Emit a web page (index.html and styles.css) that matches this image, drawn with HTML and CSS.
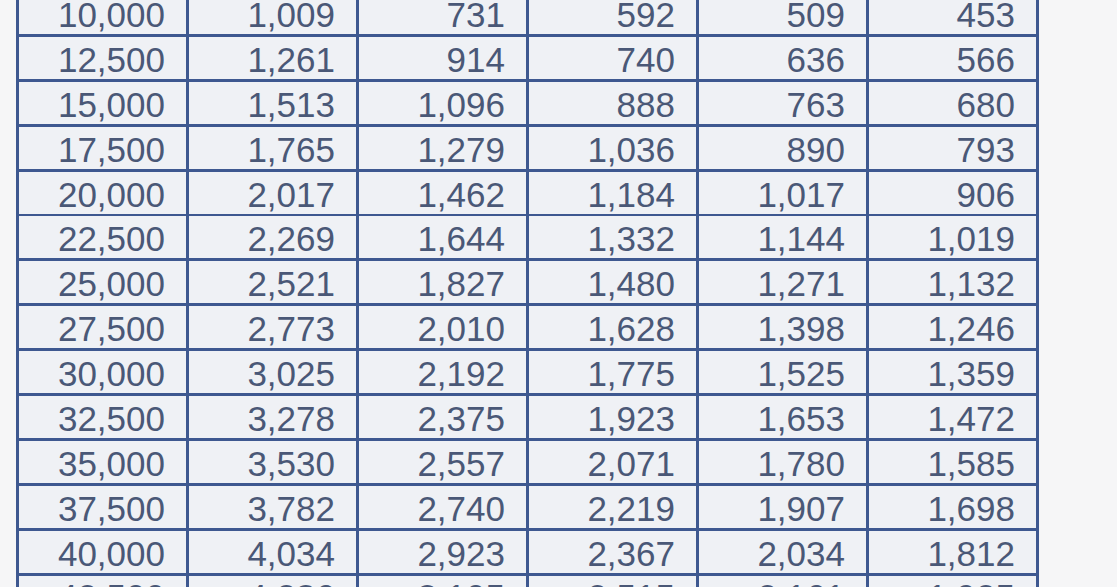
FILE: index.html
```html
<!DOCTYPE html>
<html>
<head>
<meta charset="utf-8">
<link rel="stylesheet" href="styles.css">
</head>
<body>
<div class="sheet">
  <div class="grid">
    <div class="c">10,000</div><div class="c">1,009</div><div class="c">731</div><div class="c">592</div><div class="c">509</div><div class="c">453</div>
    <div class="c">12,500</div><div class="c">1,261</div><div class="c">914</div><div class="c">740</div><div class="c">636</div><div class="c">566</div>
    <div class="c">15,000</div><div class="c">1,513</div><div class="c">1,096</div><div class="c">888</div><div class="c">763</div><div class="c">680</div>
    <div class="c">17,500</div><div class="c">1,765</div><div class="c">1,279</div><div class="c">1,036</div><div class="c">890</div><div class="c">793</div>
    <div class="c">20,000</div><div class="c">2,017</div><div class="c">1,462</div><div class="c">1,184</div><div class="c">1,017</div><div class="c">906</div>
    <div class="c">22,500</div><div class="c">2,269</div><div class="c">1,644</div><div class="c">1,332</div><div class="c">1,144</div><div class="c">1,019</div>
    <div class="c">25,000</div><div class="c">2,521</div><div class="c">1,827</div><div class="c">1,480</div><div class="c">1,271</div><div class="c">1,132</div>
    <div class="c">27,500</div><div class="c">2,773</div><div class="c">2,010</div><div class="c">1,628</div><div class="c">1,398</div><div class="c">1,246</div>
    <div class="c">30,000</div><div class="c">3,025</div><div class="c">2,192</div><div class="c">1,775</div><div class="c">1,525</div><div class="c">1,359</div>
    <div class="c">32,500</div><div class="c">3,278</div><div class="c">2,375</div><div class="c">1,923</div><div class="c">1,653</div><div class="c">1,472</div>
    <div class="c">35,000</div><div class="c">3,530</div><div class="c">2,557</div><div class="c">2,071</div><div class="c">1,780</div><div class="c">1,585</div>
    <div class="c">37,500</div><div class="c">3,782</div><div class="c">2,740</div><div class="c">2,219</div><div class="c">1,907</div><div class="c">1,698</div>
    <div class="c">40,000</div><div class="c">4,034</div><div class="c">2,923</div><div class="c">2,367</div><div class="c">2,034</div><div class="c">1,812</div>
    <div class="c last">42,500</div><div class="c last">4,286</div><div class="c last">3,105</div><div class="c last">2,515</div><div class="c last">2,161</div><div class="c last">1,925</div>
  </div>
</div>
</body>
</html>
```
FILE: styles.css
```css
html, body {
  margin: 0;
  padding: 0;
  height: 100%;
  overflow: hidden;
  background: #f6f6f7;
}
.sheet {
  width: 1117px;
  height: 587px;
  overflow: hidden;
}
.grid {
  display: grid;
  grid-template-columns: repeat(6, 167px);
  grid-auto-rows: 42px;
  column-gap: 3px;
  row-gap: 2.9px;
  padding: 3px;
  width: max-content;
  margin-left: 16px;
  margin-top: -11px;
  background: #3e5890;
}
.c {
  background: #eff1f5;
  font-family: "Liberation Sans", Arial, sans-serif;
  font-size: 35px;
  line-height: 46px;
  color: #4a5877;
  text-align: right;
  padding-right: 21px;
  white-space: nowrap;
}
.c.last {
  line-height: 41px;
}
```
